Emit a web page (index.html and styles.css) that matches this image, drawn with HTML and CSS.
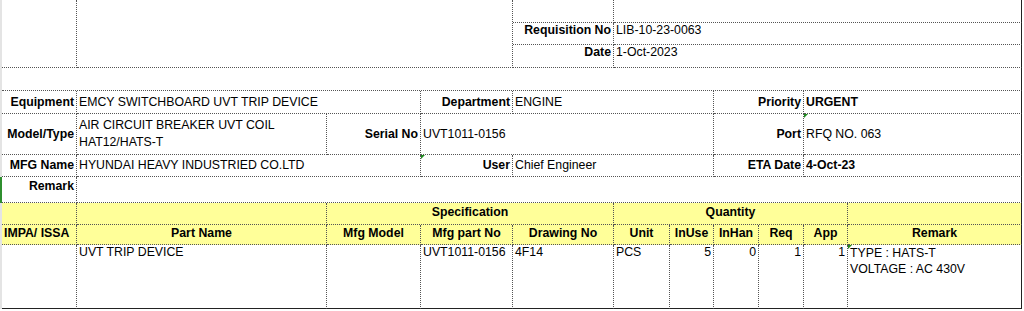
FILE: index.html
```html
<!DOCTYPE html>
<html>
<head>
<meta charset="utf-8">
<title>Requisition</title>
<link rel="stylesheet" href="styles.css">
</head>
<body>
<div class="sheet">
  <!-- top block -->
  <div class="c rs3"></div>
  <div class="c s3 rs3"></div>
  <div class="c"></div>
  <div class="c s6 last"></div>
  <div class="c b r top">Requisition No</div>
  <div class="c s6 last top">LIB-10-23-0063</div>
  <div class="c b r top">Date</div>
  <div class="c s6 last top">1-Oct-2023</div>
  <div class="c s11 last"></div>

  <!-- Equipment -->
  <div class="c b r">Equipment</div>
  <div class="c s2">EMCY SWITCHBOARD UVT TRIP DEVICE</div>
  <div class="c b r">Department</div>
  <div class="c s3">ENGINE</div>
  <div class="c b r s2">Priority</div>
  <div class="c b s2 last">URGENT</div>

  <!-- Model/Type -->
  <div class="c b r">Model/Type</div>
  <div class="c ml2"><div class="ml">AIR CIRCUIT BREAKER UVT COIL<br>HAT12/HATS-T</div></div>
  <div class="c b r">Serial No</div>
  <div class="c s4">UVT1011-0156</div>
  <div class="c b r s2">Port</div>
  <div class="c s2 last flag">RFQ NO. 063</div>

  <!-- MFG Name -->
  <div class="c b r">MFG Name</div>
  <div class="c s2">HYUNDAI HEAVY INDUSTRIED CO.LTD</div>
  <div class="c b r flag">User</div>
  <div class="c s3">Chief Engineer</div>
  <div class="c b r s2">ETA Date</div>
  <div class="c b s2 last">4-Oct-23</div>

  <!-- Remark -->
  <div class="c b r top remark-label">Remark</div>
  <div class="c s10 last"></div>

  <!-- header row 1 -->
  <div class="c hd"></div>
  <div class="c hd"></div>
  <div class="c hd ctr s3 hd1">Specification</div>
  <div class="c hd ctr s5 hd1">Quantity</div>
  <div class="c hd last"></div>

  <!-- header row 2 -->
  <div class="c hd hd2">IMPA/ ISSA</div>
  <div class="c hd hd2 ctr">Part Name</div>
  <div class="c hd hd2 ctr">Mfg Model</div>
  <div class="c hd hd2 ctr">Mfg part No</div>
  <div class="c hd hd2 ctr">Drawing No</div>
  <div class="c hd hd2 ctr">Unit</div>
  <div class="c hd hd2 ctr">InUse</div>
  <div class="c hd hd2 ctr">InHan</div>
  <div class="c hd hd2 ctr">Req</div>
  <div class="c hd hd2 ctr">App</div>
  <div class="c hd hd2 ctr last">Remark</div>

  <!-- data row -->
  <div class="c top end"></div>
  <div class="c top end">UVT TRIP DEVICE</div>
  <div class="c top end"></div>
  <div class="c top end">UVT1011-0156</div>
  <div class="c top end">4F14</div>
  <div class="c top end">PCS</div>
  <div class="c top end r">5</div>
  <div class="c top end r">0</div>
  <div class="c top end r">1</div>
  <div class="c top end r">1</div>
  <div class="c top end last flag"><div class="ml">TYPE : HATS-T<br>VOLTAGE : AC 430V</div></div>
</div>
</body>
</html>
```
FILE: styles.css
```css
html, body {
  margin: 0;
  padding: 0;
  background: #ffffff;
}

body {
  font-family: "Liberation Sans", Arial, sans-serif;
  font-size: 12.3px;
  color: #000;
}

.sheet {
  display: grid;
  grid-template-columns: 75px 250px 94px 92px 101px 56px 44px 45px 45px 44px 174px;
  grid-template-rows: 23px 22px 23px 23px 23px 41px 22px 26px 22px 20px 64px;
  border-left: 2px solid #e4e4e4;
}

.c {
  box-sizing: border-box;
  border-right: 1px dotted #555;
  border-bottom: 1px dotted #555;
  padding: 0 2px;
  display: flex;
  align-items: center;
  line-height: 15px;
  white-space: nowrap;
  overflow: hidden;
  min-width: 0;
}

.b { font-weight: bold; }
.r { justify-content: flex-end; }
.ctr { justify-content: center; }
.top { align-items: flex-start; }

.s2 { grid-column: span 2; }
.s3 { grid-column: span 3; }
.s4 { grid-column: span 4; }
.s5 { grid-column: span 5; }
.s6 { grid-column: span 6; }
.s10 { grid-column: span 10; }
.s11 { grid-column: span 11; }
.rs3 { grid-row: span 3; }

.ml { line-height: 16px; }
.ml2 .ml { line-height: 17px; }

.last { border-right: 1px solid #222; }
.end { border-bottom: 1px solid #222; }

.remark-label {
  padding-top: 2px;
  box-shadow: -2px 0 0 #2f8f2f;
}

.hd {
  background: #ffff99;
  font-weight: bold;
}

.hd1 {
  align-items: flex-start;
  padding-top: 2px;
}

.hd2 {
  align-items: flex-start;
  padding-top: 1px;
}

.flag {
  position: relative;
}

.flag::before {
  content: "";
  position: absolute;
  left: 0;
  top: 0;
  border-top: 4px solid #1e8a1e;
  border-right: 4px solid transparent;
}
```
